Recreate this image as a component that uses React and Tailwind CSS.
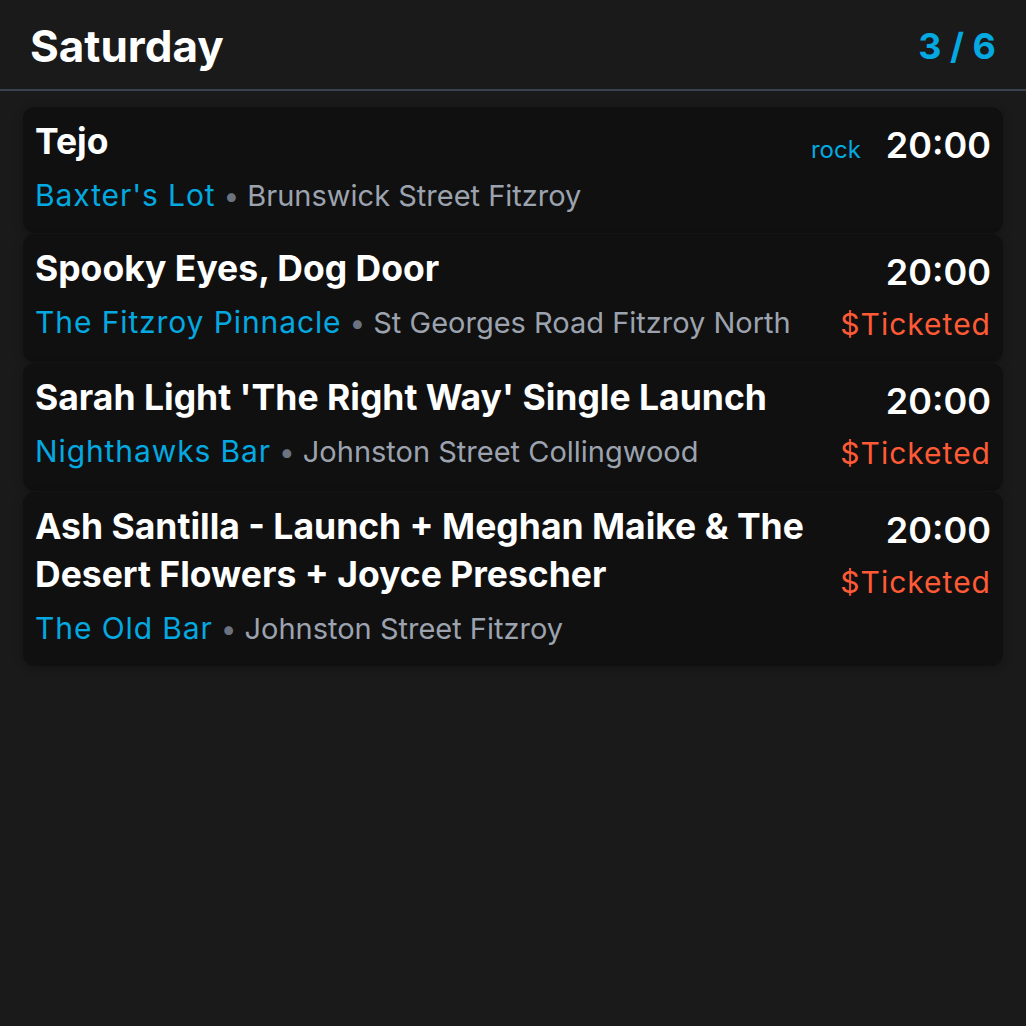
import React from "react";

const events = [
  {
    title: "Tejo",
    venue: "Baxter's Lot",
    address: "Brunswick Street Fitzroy",
    time: "20:00",
    genre: "rock",
    ticketed: false,
  },
  {
    title: "Spooky Eyes, Dog Door",
    venue: "The Fitzroy Pinnacle",
    address: "St Georges Road Fitzroy North",
    time: "20:00",
    ticketed: true,
  },
  {
    title: "Sarah Light 'The Right Way' Single Launch",
    venue: "Nighthawks Bar",
    address: "Johnston Street Collingwood",
    time: "20:00",
    ticketed: true,
  },
  {
    title: "Ash Santilla - Launch + Meghan Maike & The Desert Flowers + Joyce Prescher",
    venue: "The Old Bar",
    address: "Johnston Street Fitzroy",
    time: "20:00",
    ticketed: true,
  },
];

export default function App() {
  return (
    <div
      className="min-h-[1026px] w-full bg-[#1a1a1a] text-white"
      style={{ fontFamily: "Inter, 'Noto Sans', sans-serif" }}
    >
      <header className="flex h-[91px] items-center justify-between border-b-2 border-[#3a414f] px-[30px] pt-[3px]">
        <h1 className="text-[44px] font-bold leading-none">Saturday</h1>
        <div className="text-[36px] font-bold leading-none text-[#03a9e0]">3 / 6</div>
      </header>
      <main className="flex flex-col gap-px px-[23px] pt-[16px]">
        {events.map((e, i) => (
          <div
            key={i}
            className="flex justify-between gap-6 rounded-[12px] bg-[#101010] pb-[18px] pl-[12px] pr-[12px] pt-[11px] shadow-[0_2px_10px_rgba(0,0,0,0.25)]"
          >
            <div className="min-w-0 flex-1">
              <div className="text-[35.5px] font-bold leading-[48px]">{e.title}</div>
              <div className="mt-[9px] flex h-[40px] items-baseline overflow-visible whitespace-nowrap leading-[40px]">
                <span className="text-[30px] tracking-[0.9px] text-[#03a9e0]">{e.venue}</span>
                <span className="mx-[8px] text-[28px] text-[#6b7280]">•</span>
                <span className="text-[29px] text-[#9ca3af]">{e.address}</span>
              </div>
            </div>
            <div className="flex shrink-0 flex-col items-end">
              <div className="flex h-[54px] items-baseline gap-[25px]">
                {e.genre && (
                  <span className="text-[24px] leading-[54px] text-[#03a9e0]">{e.genre}</span>
                )}
                <span className="text-[36px] font-semibold leading-[54px]">{e.time}</span>
              </div>
              {e.ticketed && (
                <div className="mt-[5px] text-[30px] leading-[40px] tracking-[1px] text-[#ff5a36]">$Ticketed</div>
              )}
            </div>
          </div>
        ))}
      </main>
    </div>
  );
}
